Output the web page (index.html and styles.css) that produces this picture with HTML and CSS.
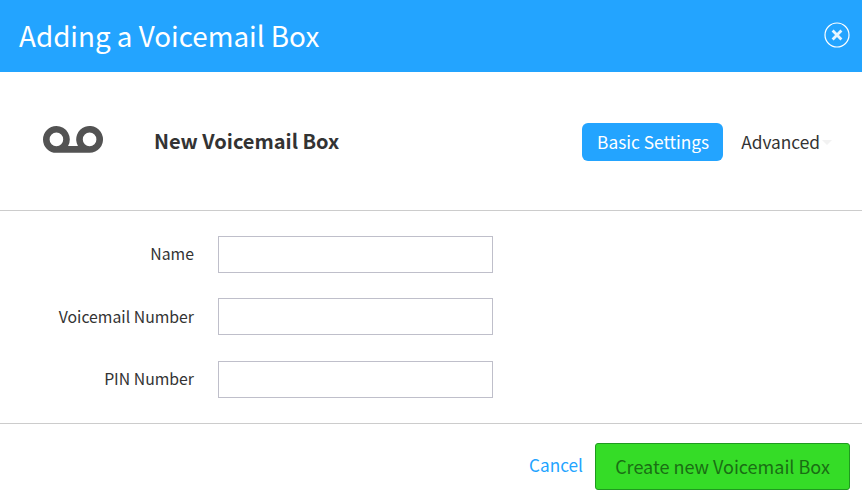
FILE: index.html
```html
<!DOCTYPE html>
<html lang="en">
<head>
    <meta charset="UTF-8">
    <meta name="viewport" content="width=device-width, initial-scale=1.0">
    <title>Adding a Voicemail Box</title>
    <link rel="stylesheet" href="styles.css">
</head>
<body>
    <div class="modal">
        <header class="modal-header">
            <h1>Adding a Voicemail Box</h1>
            <button class="close-btn" type="button" aria-label="Close">
                <svg width="26" height="26" viewBox="0 0 26 26">
                    <circle cx="13" cy="13" r="12" fill="none" stroke="#fff" stroke-width="1.2"/>
                    <path d="M8.6 8.6l8.8 8.8M17.4 8.6l-8.8 8.8" fill="none" stroke="#fff" stroke-width="2.8" opacity="0.9"/>
                </svg>
            </button>
        </header>

        <section class="summary">
            <svg class="vm-icon" width="60" height="27" viewBox="0 0 60 27">
                <path fill-rule="evenodd" fill="#535353" d="M13.4 0A13.4 13.4 0 0 1 25.06 20H34.94A13.4 13.4 0 1 1 46.6 26.8H13.4A13.4 13.4 0 0 1 13.4 0zM13.4 6.6a6.8 6.8 0 1 0 0 13.6 6.8 6.8 0 0 0 0-13.6zM46.6 6.6a6.8 6.8 0 1 0 0 13.6 6.8 6.8 0 0 0 0-13.6z"/>
            </svg>
            <h2>New Voicemail Box</h2>
            <nav class="tabs">
                <a class="tab active" href="#">Basic Settings</a>
                <a class="tab" href="#">Advanced<span class="caret"></span></a>
            </nav>
        </section>

        <form class="fields">
            <div class="form-group">
                <label for="name">Name</label>
                <input type="text" id="name">
            </div>
            <div class="form-group">
                <label for="number">Voicemail Number</label>
                <input type="text" id="number">
            </div>
            <div class="form-group">
                <label for="pin">PIN Number</label>
                <input type="text" id="pin">
            </div>
        </form>

        <footer class="modal-footer">
            <a class="cancel" href="#">Cancel</a>
            <button class="create-btn" type="button">Create new Voicemail Box</button>
        </footer>
    </div>
</body>
</html>
```

FILE: styles.css
```css
* {
    box-sizing: border-box;
    font-family: "Noto Sans CJK JP", "Open Sans", sans-serif;
}
body {
    margin: 0;
    background-color: white;
    overflow: hidden;
}
a {
    text-decoration: none;
}
.modal {
    width: 862px;
    height: 492px;
}
.modal-header {
    height: 72px;
    padding: 0 12px 2px 19px;
    display: flex;
    align-items: center;
    justify-content: space-between;
    background-color: #23a4ff;
}
.modal-header h1 {
    margin: 0;
    font-size: 27.8px;
    line-height: 40px;
    font-weight: 400;
    color: white;
}
.close-btn {
    width: 26px;
    height: 26px;
    padding: 0;
    border: none;
    background: none;
    cursor: pointer;
}
.close-btn svg {
    display: block;
}
.summary {
    height: 139px;
    padding: 0 30px 0 43px;
    display: flex;
    align-items: center;
    border-bottom: 1px solid #cccccc;
}
.vm-icon {
    margin-top: -4px;
    flex-shrink: 0;
}
.summary h2 {
    margin: 0 0 0 51px;
    font-size: 20px;
    line-height: 28px;
    font-weight: 700;
    color: #333333;
}
.tabs {
    margin-left: auto;
    padding-top: 2px;
    display: flex;
    align-items: center;
    gap: 18px;
}
.tab {
    height: 38px;
    font-size: 17.3px;
    line-height: 38px;
    color: #333333;
    display: flex;
    align-items: center;
}
.tab.active {
    padding: 0 14px 0 15px;
    border-radius: 6px;
    background-color: #23a4ff;
    color: white;
}
.caret {
    width: 0;
    height: 0;
    margin-left: 2px;
    border-left: 5px solid transparent;
    border-right: 5px solid transparent;
    border-top: 5px solid #f2f2f2;
}
.fields {
    height: 213px;
    padding-top: 25px;
    border-bottom: 1px solid #cccccc;
}
.form-group {
    display: flex;
    align-items: center;
    margin-bottom: 25.4px;
}
.form-group label {
    width: 194px;
    padding-bottom: 0.5px;
    font-size: 15.8px;
    line-height: 24px;
    text-align: right;
    color: #333333;
}
.form-group input {
    width: 275px;
    height: 37px;
    margin-left: 24px;
    padding: 0 8px;
    border: 1px solid #bfbfca;
    background-color: white;
}
.modal-footer {
    padding: 19px 12px 0 0;
    display: flex;
    align-items: center;
    justify-content: flex-end;
}
.cancel {
    font-size: 17.2px;
    line-height: 24px;
    color: #23a4ff;
    margin-top: -4px;
}
.create-btn {
    width: 255px;
    height: 47px;
    margin-left: 12px;
    padding-bottom: 2px;
    border: 1px solid #1f9a1f;
    border-radius: 3px;
    background-color: #35dc27;
    color: #1a6e14;
    font-size: 18px;
    cursor: pointer;
}
```
